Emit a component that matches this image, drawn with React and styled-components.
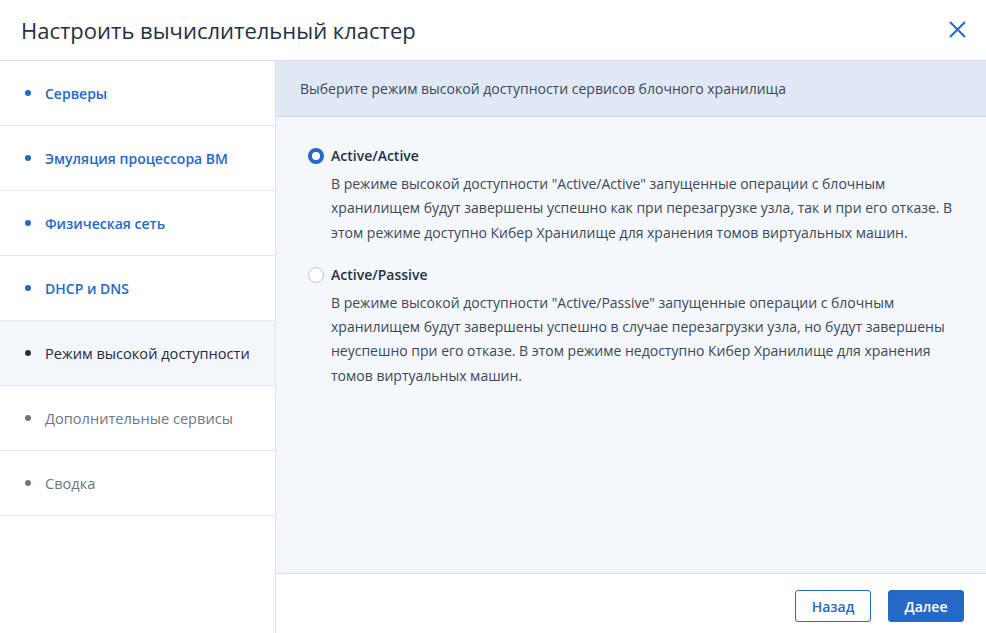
import React, { useState } from "react";
import styled, { createGlobalStyle } from "styled-components";

const Global = createGlobalStyle`
  html, body { margin: 0; padding: 0; background: #fff; }
  body { font-family: "Open Sans", "Noto Sans", sans-serif; color: #243143; }
  * { box-sizing: border-box; }
`;

const Dialog = styled.div`
  width: 986px;
  height: 633px;
  display: flex;
  flex-direction: column;
  background: #fff;
  overflow: hidden;
`;

const Header = styled.header`
  height: 61px;
  flex: none;
  display: flex;
  align-items: center;
  justify-content: space-between;
  padding: 0 20px 0 21px;
  border-bottom: 1px solid #d4def0;
`;

const Title = styled.h1`
  margin: 0;
  font-size: 22px;
  font-weight: 400;
  color: #243143;
`;

const CloseButton = styled.button`
  border: 0;
  background: none;
  padding: 0;
  width: 18px;
  height: 18px;
  display: flex;
  align-items: center;
  justify-content: center;
  cursor: pointer;
  margin-top: -2px;
`;

const Body = styled.div`
  flex: 1;
  display: flex;
  min-height: 0;
`;

const Sidebar = styled.nav`
  width: 276px;
  flex: none;
  border-right: 1px solid #dbe3f0;
  display: flex;
  flex-direction: column;
`;

const Step = styled.div`
  height: 65px;
  display: flex;
  align-items: center;
  gap: 14px;
  padding-left: 25px;
  border-bottom: 1px solid #e1e8f3;
  background: ${(p) => (p.$active ? "#f3f6fb" : "#fff")};
  font-size: ${(p) => (p.$state === "done" ? "14px" : "14.6px")};
  font-weight: ${(p) => (p.$state === "done" ? 600 : 400)};
  color: ${(p) =>
    p.$state === "done" ? "#2668c5" : p.$state === "active" ? "#1f2b3b" : "#6c7785"};
`;

const Dot = styled.span`
  width: 6px;
  height: 6px;
  border-radius: 50%;
  flex: none;
  background: ${(p) =>
    p.$state === "done" ? "#2668c5" : p.$state === "active" ? "#243143" : "#6c7785"};
`;

const Main = styled.section`
  flex: 1;
  display: flex;
  flex-direction: column;
  min-width: 0;
`;

const Banner = styled.div`
  height: 56px;
  flex: none;
  display: flex;
  align-items: center;
  padding: 0 24px;
  background: #dfe8f4;
  border-bottom: 1px solid #c9d7ec;
  font-size: 14px;
  color: #3b4858;
`;

const Content = styled.div`
  flex: 1;
  background: #f4f7fc;
  padding: 29px 24px 0 32px;
  display: flex;
  flex-direction: column;
  gap: 20px;
  border-bottom: 1px solid #d6dff0;
`;

const Option = styled.label`
  display: grid;
  grid-template-columns: 16px 1fr;
  column-gap: 7px;
  cursor: pointer;
`;

const Radio = styled.span`
  width: 16px;
  height: 16px;
  border-radius: 50%;
  margin-top: 2px;
  background: #fff;
  border: ${(p) => (p.$checked ? "4.5px solid #2668c5" : "1px solid #b9c9e6")};
`;

const OptionTitle = styled.div`
  font-size: 14px;
  font-weight: 600;
  line-height: 20px;
  color: #243143;
`;

const OptionText = styled.p`
  grid-column: 2;
  margin: 6px 0 0;
  font-size: 14px;
  line-height: 24.3px;
  color: #3b4858;
  max-width: 630px;
`;

const Footer = styled.footer`
  height: 59px;
  flex: none;
  display: flex;
  justify-content: flex-end;
  align-items: flex-start;
  gap: 17px;
  padding: 16px 22px 0 0;
`;

const Button = styled.button`
  width: 76px;
  height: 32px;
  border-radius: 3px;
  font-family: inherit;
  font-size: 14px;
  font-weight: 600;
  cursor: pointer;
  border: 1px solid #2668c5;
  background: ${(p) => (p.$primary ? "#2668c5" : "#fff")};
  color: ${(p) => (p.$primary ? "#fff" : "#2668c5")};
`;

const steps = [
  { label: "Серверы", state: "done" },
  { label: "Эмуляция процессора ВМ", state: "done" },
  { label: "Физическая сеть", state: "done" },
  { label: "DHCP и DNS", state: "done" },
  { label: "Режим высокой доступности", state: "active" },
  { label: "Дополнительные сервисы", state: "todo" },
  { label: "Сводка", state: "todo" },
];

const modes = [
  {
    id: "aa",
    title: "Active/Active",
    text:
      'В режиме высокой доступности "Active/Active" запущенные операции с блочным хранилищем будут завершены успешно как при перезагрузке узла, так и при его отказе. В этом режиме доступно Кибер Хранилище для хранения томов виртуальных машин.',
  },
  {
    id: "ap",
    title: "Active/Passive",
    text:
      'В режиме высокой доступности "Active/Passive" запущенные операции с блочным хранилищем будут завершены успешно в случае перезагрузки узла, но будут завершены неуспешно при его отказе. В этом режиме недоступно Кибер Хранилище для хранения томов виртуальных машин.',
  },
];

export default function App() {
  const [mode, setMode] = useState("aa");
  return (
    <Dialog>
      <Global />
      <Header>
        <Title>Настроить вычислительный кластер</Title>
        <CloseButton aria-label="Закрыть">
          <svg width="17" height="17" viewBox="0 0 17 17">
            <path d="M1 1L16 16M16 1L1 16" stroke="#2668c5" strokeWidth="2" fill="none" />
          </svg>
        </CloseButton>
      </Header>
      <Body>
        <Sidebar>
          {steps.map((s) => (
            <Step key={s.label} $state={s.state} $active={s.state === "active"}>
              <Dot $state={s.state} />
              {s.label}
            </Step>
          ))}
        </Sidebar>
        <Main>
          <Banner>Выберите режим высокой доступности сервисов блочного хранилища</Banner>
          <Content>
            {modes.map((m) => (
              <Option key={m.id} onClick={() => setMode(m.id)}>
                <Radio $checked={mode === m.id} />
                <OptionTitle>{m.title}</OptionTitle>
                <OptionText>{m.text}</OptionText>
              </Option>
            ))}
          </Content>
          <Footer>
            <Button>Назад</Button>
            <Button $primary>Далее</Button>
          </Footer>
        </Main>
      </Body>
    </Dialog>
  );
}
